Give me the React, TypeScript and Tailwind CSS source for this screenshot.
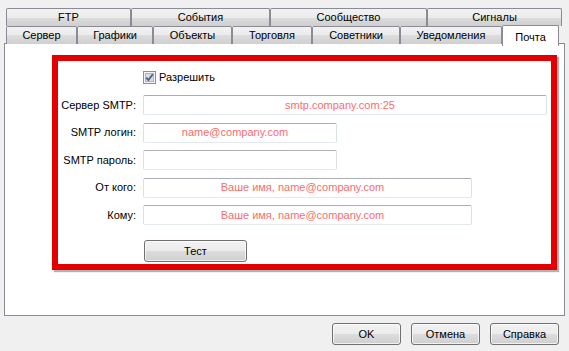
const topTabs = [
  { label: "FTP", w: "w-[125px]" },
  { label: "События", w: "w-[139px]" },
  { label: "Сообщество", w: "w-[157px]" },
  { label: "Сигналы", w: "w-[135px]" },
];

const bottomTabs = [
  { label: "Сервер", w: "w-[71px]" },
  { label: "Графики", w: "w-[76px]" },
  { label: "Объекты", w: "w-[79px]" },
  { label: "Торговля", w: "w-[80px]" },
  { label: "Советники", w: "w-[88px]" },
  { label: "Уведомления", w: "w-[102px]" },
];

const tabBg =
  "bg-[linear-gradient(#f2f2f2_0%,#ebebeb_50%,#dddddd_50%,#cfcfcf_100%)]";
const btnBg =
  "bg-[linear-gradient(#f2f2f2_0%,#ebebeb_50%,#dddddd_50%,#cfcfcf_100%)]";

const Tab = ({ label, w }: { label: string; w: string }) => (
  <div
    className={`${w} h-[18px] flex items-center justify-center border-t border-x border-[#898c95] rounded-t-[2px] ${tabBg} text-black`}
  >
    {label}
  </div>
);

const Field = ({
  label,
  w,
  hint,
}: {
  label: string;
  w: string;
  hint?: string;
}) => (
  <div className="flex items-center h-[20px]">
    <div className="w-[78px] text-right text-black">{label}</div>
    <div
      className={`${w} ml-[7px] h-[20px] flex items-center justify-center pr-[10px] rounded-[2px] border border-t-[#abadb3] border-x-[#dbdfe6] border-b-[#e3e9ef] bg-white text-[#fb6d6d]`}
    >
      {hint}
    </div>
  </div>
);

const WinButton = ({ label, w }: { label: string; w: string }) => (
  <div
    className={`${w} h-[22px] flex items-center justify-center rounded-[3px] border border-[#707070] ${btnBg} shadow-[inset_0_0_0_1px_rgba(255,255,255,0.7)] text-black`}
  >
    {label}
  </div>
);

export default function App() {
  return (
    <div className="w-[569px] h-[351px] bg-[#f0f0f0] font-['Liberation_Sans',Arial,sans-serif] text-[11px] overflow-hidden">
      {/* tab rows */}
      <div className="pt-[8px] pl-[6px] flex">
        {topTabs.map((t) => (
          <Tab key={t.label} label={t.label} w={t.w} />
        ))}
      </div>
      <div className="pl-[6px] flex items-end h-[18px] relative z-10">
        {bottomTabs.map((t) => (
          <Tab key={t.label} label={t.label} w={t.w} />
        ))}
        <div className="w-[57px] h-[21px] mb-[-2px] flex items-start justify-center pt-[3px] border-t border-x border-[#898c95] rounded-t-[2px] bg-white text-black">
          Почта
        </div>
      </div>

      {/* page */}
      <div className="mx-[4px] -mt-[1px] h-[273px] border border-[#898c95] bg-white">
        <div className="ml-[47px] mt-[11px] w-[505px] h-[215px] border-[6px] border-[#e30000] bg-white shadow-[2px_2px_1px_rgba(0,0,0,0.3)]">
          <div className="mt-[10px] h-[13px] pl-[85px] flex items-center">
            <svg width="13" height="13" viewBox="0 0 13 13">
              <rect x="0.5" y="0.5" width="12" height="12" fill="#f4f4f4" stroke="#8e8f8f" />
              <rect x="2.5" y="2.5" width="8" height="8" fill="#dcdcdc" stroke="#b4b4b4" />
              <path d="M3.2 6.6 L5.4 9 L9.8 3.2" fill="none" stroke="#4a5f97" strokeWidth="1.8" />
            </svg>
            <span className="ml-[3px] text-black">Разрешить</span>
          </div>
          <div className="mt-[11px] flex flex-col gap-[7.5px]">
            <Field label="Сервер SMTP:" w="w-[404px]" hint="smtp.company.com:25" />
            <Field label="SMTP логин:" w="w-[194px]" hint="name@company.com" />
            <Field label="SMTP пароль:" w="w-[194px]" />
            <Field label="От кого:" w="w-[329px]" hint="Ваше имя, name@company.com" />
            <Field label="Кому:" w="w-[329px]" hint="Ваше имя, name@company.com" />
          </div>
          <div className="mt-[15px] ml-[86px]">
            <WinButton label="Тест" w="w-[103px]" />
          </div>
        </div>
      </div>

      {/* dialog buttons */}
      <div className="mt-[7px] pr-[10px] flex justify-end gap-[10px]">
        <WinButton label="OK" w="w-[69px]" />
        <WinButton label="Отмена" w="w-[69px]" />
        <WinButton label="Справка" w="w-[69px]" />
      </div>
    </div>
  );
}
